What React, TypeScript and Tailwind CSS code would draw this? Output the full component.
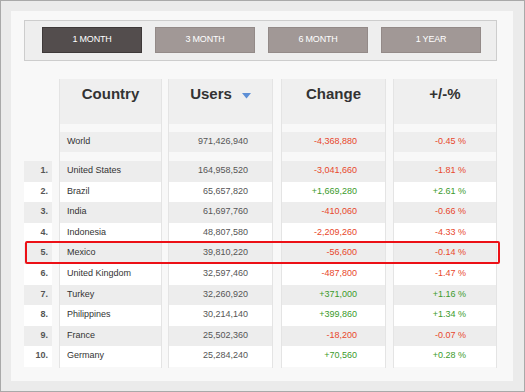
import React from "react";

type Row = {
  rank: string;
  country: string;
  users: string;
  change: string;
  pct: string;
};

const rows: Row[] = [
  { rank: "1.", country: "United States", users: "164,958,520", change: "-3,041,660", pct: "-1.81 %" },
  { rank: "2.", country: "Brazil", users: "65,657,820", change: "+1,669,280", pct: "+2.61 %" },
  { rank: "3.", country: "India", users: "61,697,760", change: "-410,060", pct: "-0.66 %" },
  { rank: "4.", country: "Indonesia", users: "48,807,580", change: "-2,209,260", pct: "-4.33 %" },
  { rank: "5.", country: "Mexico", users: "39,810,220", change: "-56,600", pct: "-0.14 %" },
  { rank: "6.", country: "United Kingdom", users: "32,597,460", change: "-487,800", pct: "-1.47 %" },
  { rank: "7.", country: "Turkey", users: "32,260,920", change: "+371,000", pct: "+1.16 %" },
  { rank: "8.", country: "Philippines", users: "30,214,140", change: "+399,860", pct: "+1.34 %" },
  { rank: "9.", country: "France", users: "25,502,360", change: "-18,200", pct: "-0.07 %" },
  { rank: "10.", country: "Germany", users: "25,284,240", change: "+70,560", pct: "+0.28 %" },
];

const tabs = ["1 MONTH", "3 MONTH", "6 MONTH", "1 YEAR"];

const tone = (v: string) => (v.startsWith("+") ? "text-[#3b9a2b]" : "text-[#e8472c]");
const stripe = (i: number) => (i % 2 === 0 ? "bg-[#ededed]" : "bg-white");

const Column = ({
  width,
  className,
  title,
  world,
  worldClass,
  cells,
  align,
  pad,
  sort,
}: {
  width: string;
  className: string;
  title: string;
  world: string;
  worldClass: string;
  cells: { text: string; cls: string }[];
  align: "left" | "right";
  pad: string;
  sort?: boolean;
}) => (
  <div className={`${width} ${className} flex flex-col border-x border-[#e4e4e4] h-[289px]`}>
    <div className="h-[45px] bg-[#efefef] flex items-start justify-center pt-[6px]">
      <span className="text-[15px] font-bold text-[#333] leading-[18px] flex items-center gap-[10px]">
        {title}
        {sort && (
          <svg width="9" height="6" viewBox="0 0 9 6" className="mt-[3px]">
            <path d="M0 0 H9 L4.5 5.5 Z" fill="#5d8fd6" />
          </svg>
        )}
      </span>
    </div>
    <div className="h-[8px]" />
    <div className={`h-[20px] bg-[#eeeeee] flex items-center ${align === "left" ? "justify-start" : "justify-end"} ${pad} ${worldClass}`}>
      {world}
    </div>
    <div className="h-[9px]" />
    {cells.map((c, i) => (
      <div
        key={i}
        className={`h-[20.6px] ${stripe(i)} flex items-center pb-[1px] ${align === "left" ? "justify-start" : "justify-end"} ${pad} ${c.cls}`}>
        {c.text}
      </div>
    ))}
  </div>
);

export default function App() {
  return (
    <div
      className="w-[525px] h-[392px] border border-[#a9a9a9] bg-[#ebebeb] p-[10px] text-[9px] text-[#333]"
      style={{ fontFamily: '"Liberation Sans", Arial, sans-serif' }}>
      <div className="relative w-[502px] h-[370px] bg-[#f8f8f8] pl-[13px] pt-[9px]">
        <div className="w-[473px] h-[41px] border border-[#cdcdcd] bg-[#eeeeee] flex gap-[13px] pl-[17px] pt-[6px]">
          {tabs.map((t, i) => (
            <button
              key={t}
              className={`w-[100px] h-[26px] border text-white text-[9px] tracking-[-0.2px] ${
                i === 0 ? "bg-[#534d4d] border-[#3e3939]" : "bg-[#a19896] border-[#938a88]"
              }`}>
              {t}
            </button>
          ))}
        </div>

        <div className="flex mt-[18px]">
          <div className="w-[28px] flex flex-col h-[289px]">
            <div className="h-[45px]" />
            <div className="h-[8px]" />
            <div className="h-[20px]" />
            <div className="h-[9px]" />
            {rows.map((r, i) => (
              <div key={r.rank} className={`h-[20.6px] ${stripe(i)} flex items-center justify-end pr-[4px] pb-[1px] font-bold text-[#555]`}>
                {r.rank}
              </div>
            ))}
          </div>
          <Column
            width="w-[103px]"
            className="ml-[7px]"
            title="Country"
            world="World"
            worldClass=""
            align="left"
            pad="pl-[7px]"
            cells={rows.map((r) => ({ text: r.country, cls: "" }))}
          />
          <Column
            width="w-[105px]"
            className="ml-[6px]"
            title="Users"
            sort
            world="971,426,940"
            worldClass="text-[#555]"
            align="right"
            pad="pr-[24px]"
            cells={rows.map((r) => ({ text: r.users, cls: "text-[#555]" }))}
          />
          <Column
            width="w-[105px]"
            className="ml-[8px]"
            title="Change"
            world="-4,368,880"
            worldClass="text-[#e8472c]"
            align="right"
            pad="pr-[28px]"
            cells={rows.map((r) => ({ text: r.change, cls: tone(r.change) }))}
          />
          <Column
            width="w-[104px]"
            className="ml-[7px]"
            title="+/-%"
            world="-0.45 %"
            worldClass="text-[#e8472c]"
            align="right"
            pad="pr-[30px]"
            cells={rows.map((r) => ({ text: r.pct, cls: tone(r.pct) }))}
          />
        </div>

        <div className="absolute left-[14px] top-[230px] w-[475px] h-[23px] border-2 border-[#ec1016] rounded-[2px] pointer-events-none" />
      </div>
    </div>
  );
}
